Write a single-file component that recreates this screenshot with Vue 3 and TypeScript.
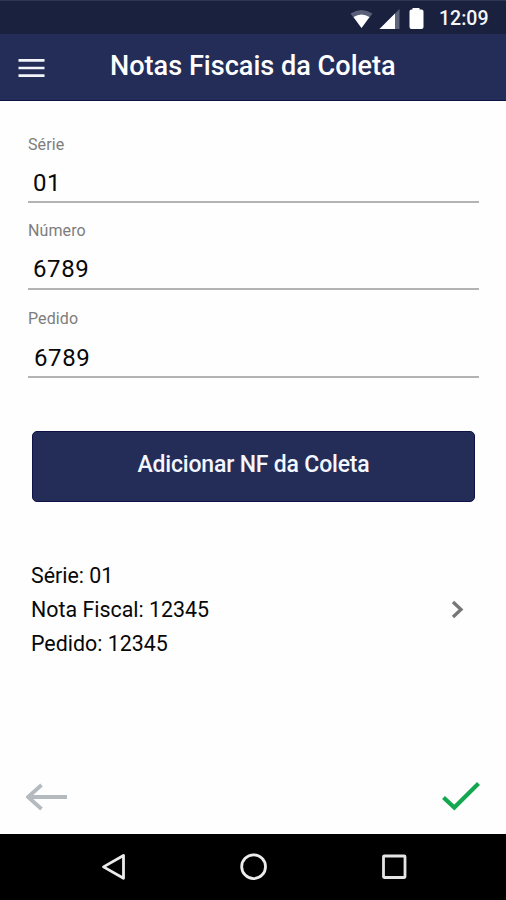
<script setup lang="ts">
import { ref } from 'vue'

interface Field {
  id: string
  label: string
  value: string
}

const fields = ref<Field[]>([
  { id: 'serie', label: 'Série', value: '01' },
  { id: 'numero', label: 'Número', value: '6789' },
  { id: 'pedido', label: 'Pedido', value: '6789' },
])

const notas = ref([{ serie: '01', numero: '12345', pedido: '12345' }])
</script>

<template>
  <div class="screen">
    <div class="status">
      <svg class="signals" width="76" height="24" viewBox="0 0 76 24">
        <path d="M0.5 5.500Q11.500 -1.500 22.500 5.500L11.500 20Z" fill="#596078" />
        <path d="M3.500 9Q11.500 4 19.500 9L11.500 20Z" fill="#fff" />
        <path d="M49.500 1V21H29.500Z" fill="#5d647b" />
        <path d="M45 5.500V21H29.500Z" fill="#fff" />
        <path d="M62.500 1.500V0H69.500V1.500H71.500Q73.500 1.500 73.500 3.500V19Q73.500 21 71.500 21H61.500Q59.500 21 59.500 19V3.500Q59.500 1.500 61.500 1.500Z" fill="#fff" />
      </svg>
      <span class="clock">12:09</span>
    </div>

    <header class="bar">
      <button class="menu" aria-label="Menu">
        <svg width="28" height="22" viewBox="0 0 28 22">
          <path d="M0.500 3.300H26.500M0.500 11H26.500M0.500 18.600H26.500" stroke="#f4f5f8" stroke-width="2.700" />
        </svg>
      </button>
      <h1>Notas Fiscais da Coleta</h1>
    </header>

    <main>
      <form @submit.prevent>
        <div v-for="f in fields" :key="f.id" class="field" :class="f.id">
          <label>{{ f.label }}</label>
          <div class="value">{{ f.value }}</div>
        </div>
        <button class="add"><span>Adicionar NF da Coleta</span></button>
      </form>

      <div v-for="(n, i) in notas" :key="i" class="nota">
        <div class="lines">
          <p>Série: {{ n.serie }}</p>
          <p>Nota Fiscal: {{ n.numero }}</p>
          <p>Pedido: {{ n.pedido }}</p>
        </div>
        <svg width="14" height="20" viewBox="0 0 14 20">
          <path d="M2 2L10 9.500L2 17" fill="none" stroke="#777" stroke-width="3.300" />
        </svg>
      </div>

      <div class="actions">
        <svg width="42" height="28" viewBox="0 0 42 28">
          <path d="M41 14H2M15.500 2L2 14L15.500 26" fill="none" stroke="#b5babf" stroke-width="3.800" />
        </svg>
        <svg width="40" height="32" viewBox="0 0 40 32">
          <path d="M2.500 16.500L13.300 26.500L37.500 2.500" fill="none" stroke="#13a750" stroke-width="4.200" />
        </svg>
      </div>
    </main>

    <nav>
      <svg width="26" height="30" viewBox="0 0 26 30">
        <path d="M22.500 3.500V26.300L2.500 14.900Z" fill="none" stroke="#ececec" stroke-width="2.800" stroke-linejoin="round" />
      </svg>
      <svg width="30" height="30" viewBox="0 0 30 30">
        <circle cx="13.600" cy="14.700" r="11.900" fill="none" stroke="#ececec" stroke-width="2.800" />
      </svg>
      <svg width="26" height="26" viewBox="0 0 26 26">
        <rect x="1.500" y="2" width="21.500" height="21.500" rx=".7" fill="none" stroke="#e4e4e4" stroke-width="2.800" />
      </svg>
    </nav>
  </div>
</template>

<style>
body {
  margin: 0;
  background: #fff;
}
</style>

<style scoped>
.screen {
  width: 506px;
  height: 900px;
  display: flex;
  flex-direction: column;
  overflow: hidden;
  background: #fefefe;
  color: #080808;
  font-family: Roboto, 'Liberation Sans', sans-serif;
  white-space: nowrap;
}

button {
  border: 0;
  padding: 0;
  font: inherit;
}

.status {
  height: 34px;
  flex: none;
  box-sizing: border-box;
  padding: 7px 0 0 350px;
  display: flex;
  background: #1a213e;
  border-top: 1px solid #303650;
}

.clock {
  margin-left: 13px;
  font-size: 19.5px;
  line-height: 21px;
  font-weight: 500;
  color: #f5f6fa;
}

.bar {
  height: 67px;
  flex: none;
  box-sizing: border-box;
  display: flex;
  background: #232d58;
  border-bottom: 1px solid #0e1246;
}

.menu {
  width: 28px;
  height: 22px;
  margin: 23px 0 0 18px;
  background: none;
}

.menu svg {
  display: block;
}

h1 {
  margin: 16px 0 0 64px;
  font-size: 27.1px;
  line-height: 32px;
  font-weight: 500;
  color: #fff;
}

main {
  flex: 1;
  display: flex;
  flex-direction: column;
  padding: 32px 27px 0 28px;
}

.field {
  height: 88px;
}

.field.serie {
  height: 87px;
}

.field label {
  display: block;
  height: 22px;
  font-size: 16px;
  line-height: 22px;
  letter-spacing: 0.1px;
  color: #7d7d7d;
}

.serie label {
  line-height: 23px;
}

.value {
  height: 48px;
  box-sizing: border-box;
  padding: 11px 0 0 5px;
  border-bottom: 2px solid #b3b3b3;
  font-size: 24px;
  line-height: 32px;
  letter-spacing: 0.6px;
}

.serie .value {
  padding-top: 12px;
}

.pedido .value {
  padding-top: 12px;
  padding-left: 6px;
}

.add {
  display: block;
  width: 443px;
  height: 71px;
  margin: 35px 0 0 4px;
  border-radius: 5px;
  background: #232d58;
  border: 1px solid #0e1246;
  color: #f4f7ff;
  font-size: 23px;
  letter-spacing: -0.18px;
  font-weight: 500;
}

.add span {
  display: block;
  height: 69px;
  line-height: 66px;
}

.nota {
  margin: 57px 0 0 3px;
  display: flex;
  align-items: center;
  justify-content: space-between;
  padding-right: 14px;
}

.nota p {
  margin: 0;
  font-size: 21.4px;
  line-height: 34px;
}

.actions {
  margin: auto -2px 0;
  padding-bottom: 21px;
  display: flex;
  justify-content: space-between;
  align-items: center;
}

nav {
  height: 66px;
  flex: none;
  display: flex;
  align-items: center;
  padding: 0 98px 0 101px;
  justify-content: space-between;
  background: #000;
}
</style>
